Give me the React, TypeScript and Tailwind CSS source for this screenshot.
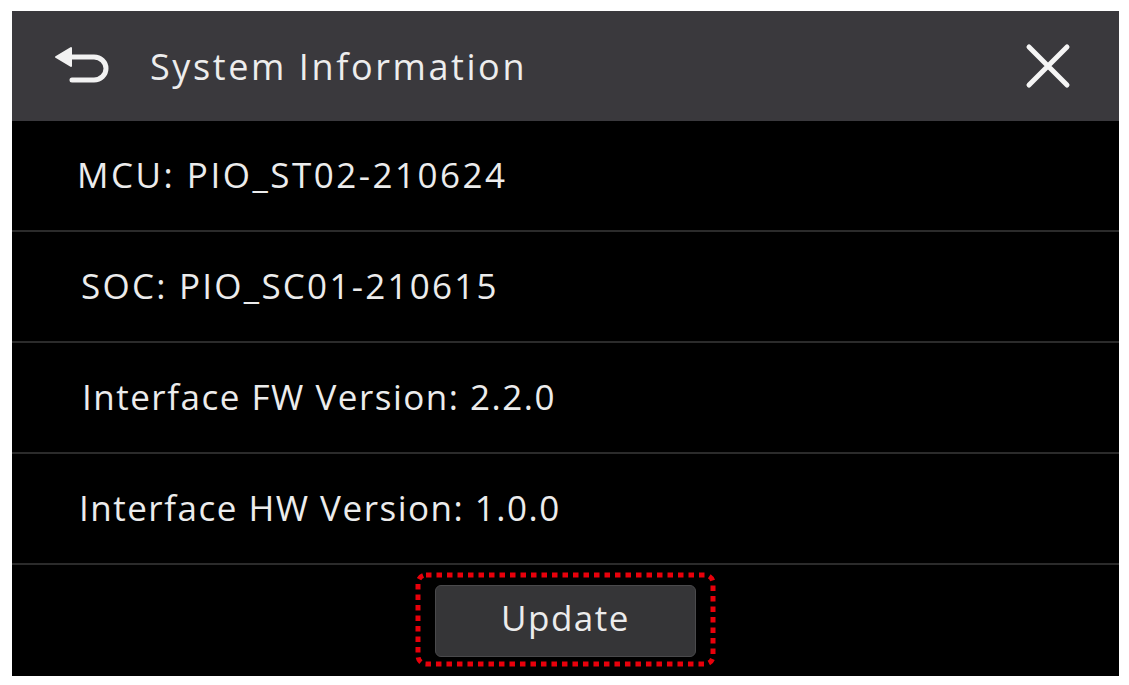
import React from 'react';

const rows = [
  { label: 'MCU: PIO_ST02-210624', cls: 'pl-[65px] tracking-[2.5px]' },
  { label: 'SOC: PIO_SC01-210615', cls: 'pl-[69px] tracking-[2.25px]' },
  { label: 'Interface FW Version: 2.2.0', cls: 'pl-[70px] tracking-[1.5px]' },
  { label: 'Interface HW Version: 1.0.0', cls: 'pl-[67px] tracking-[1.5px]' },
];

function BackIcon() {
  return (
    <svg width="56" height="40" viewBox="0 0 56 40" fill="none">
      <path d="M14 11 H40 A12 11.5 0 0 1 40 34 H18" stroke="#f2f2f2" strokeWidth="5" strokeLinecap="round" strokeLinejoin="round" />
      <path d="M2 11 L17 2 L17 20 Z" fill="#f2f2f2" stroke="#f2f2f2" strokeWidth="2" strokeLinejoin="round" />
    </svg>
  );
}

function CloseIcon() {
  return (
    <svg width="46" height="46" viewBox="0 0 46 46" fill="none">
      <path d="M4 4 L42 42 M42 4 L4 42" stroke="#f5f5f5" strokeWidth="5" strokeLinecap="round" />
    </svg>
  );
}

export default function App() {
  return (
    <div className="w-[1129px] h-[685px] bg-white pt-[11px] pl-[12px] font-['Open_Sans',_'Noto_Sans',sans-serif]">
      <div className="w-[1107px] h-[665px] bg-black flex flex-col">
        {/* header */}
        <div className="h-[110px] bg-[#3a393d] flex items-center pl-[42px] pr-[48px]">
          <BackIcon />
          <h1 className="ml-[40px] text-[36px] text-[#ededed] tracking-[2.6px] pt-[2px]">System Information</h1>
          <div className="flex-1" />
          <CloseIcon />
        </div>

        {rows.map((r) => (
          <div key={r.label} className={`h-[111px] flex items-center border-b-2 border-[#2b2b2b] ${r.cls}`}>
            <span className="text-[35px] text-[#ececec]">{r.label}</span>
          </div>
        ))}

        {/* update button */}
        <div className="flex-1 flex items-center justify-center">
          <div className="relative px-[20px] py-[13px]">
            <svg className="absolute inset-0" width="301" height="95" viewBox="0 0 301 95" fill="none">
              <rect x="3" y="3" width="295" height="89" rx="8" stroke="#e8000b" strokeWidth="5" strokeDasharray="5.5 5" />
            </svg>
            <button className="relative w-[261px] h-[72px] rounded-[6px] bg-[#353537] border border-[#4a4a4c] text-[35px] text-[#ececec] tracking-[1.5px] flex items-center justify-center pb-[4px]">
              Update
            </button>
          </div>
        </div>
      </div>
    </div>
  );
}
